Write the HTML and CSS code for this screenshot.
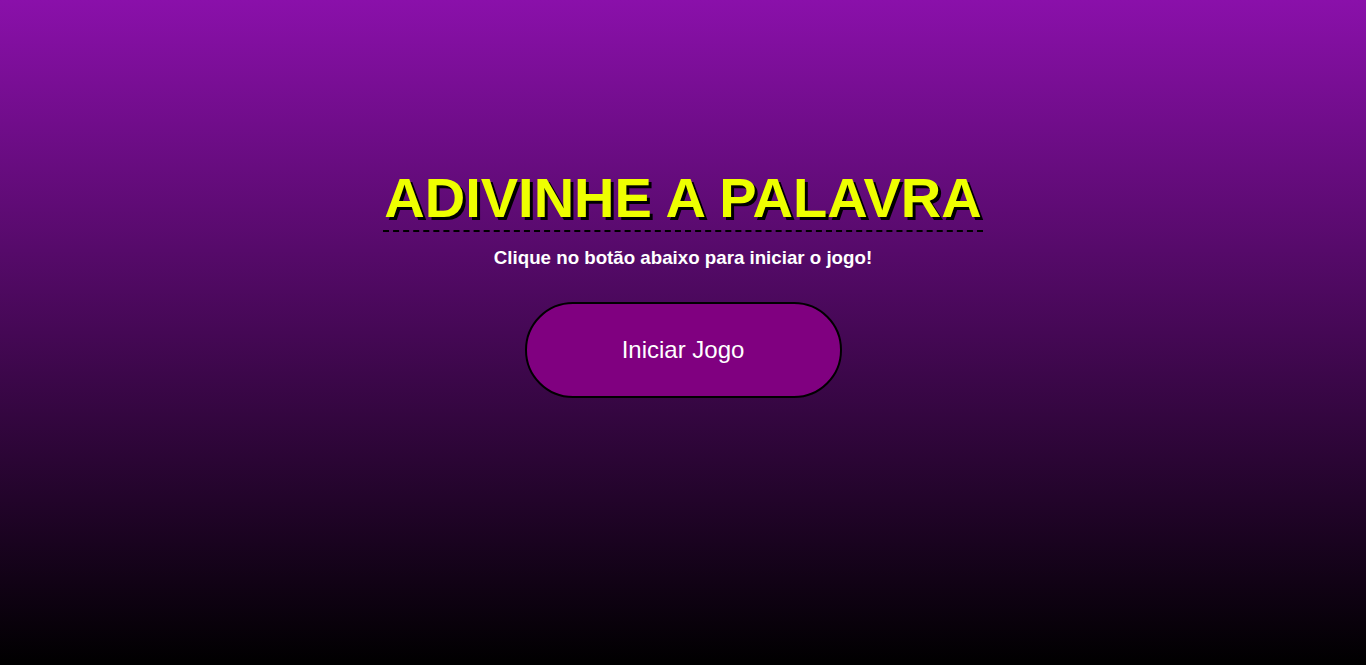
FILE: index.html
```html
<!DOCTYPE html>
<html lang="pt-BR">
<head>
<meta charset="utf-8">
<title>Adivinhe a Palavra</title>
<link rel="stylesheet" href="styles.css">
</head>
<body>
<main class="screen">
  <h1 class="title">ADIVINHE A PALAVRA</h1>
  <p class="subtitle">Clique no botão abaixo para iniciar o jogo!</p>
  <button class="start">Iniciar Jogo</button>
</main>
</body>
</html>
```
FILE: styles.css
```css
html, body {
  margin: 0;
  padding: 0;
  height: 100%;
}
body {
  background: linear-gradient(to bottom, #8a10aa 0%, #000 100%);
  font-family: "Liberation Sans", Arial, sans-serif;
  color: #fff;
  overflow: hidden;
}
.screen {
  display: flex;
  flex-direction: column;
  align-items: center;
  padding-top: 166px;
}
.title {
  display: inline-block;
  margin: 0;
  font-size: 56px;
  font-weight: bold;
  line-height: 64px;
  color: #eeff00;
  text-shadow: 3px 3px 0 #000;
  border-bottom: 2px dashed #000;
  padding: 0 1px;
}
.subtitle {
  margin: 15px 0 0;
  font-size: 18.72px;
  font-weight: bold;
  line-height: 22px;
}
.start {
  margin-top: 33px;
  width: 317px;
  height: 96px;
  border: 2px solid #000;
  border-radius: 48px;
  background: #800080;
  color: #fff;
  font-family: "Liberation Sans", Arial, sans-serif;
  font-size: 24px;
  cursor: pointer;
}
```
